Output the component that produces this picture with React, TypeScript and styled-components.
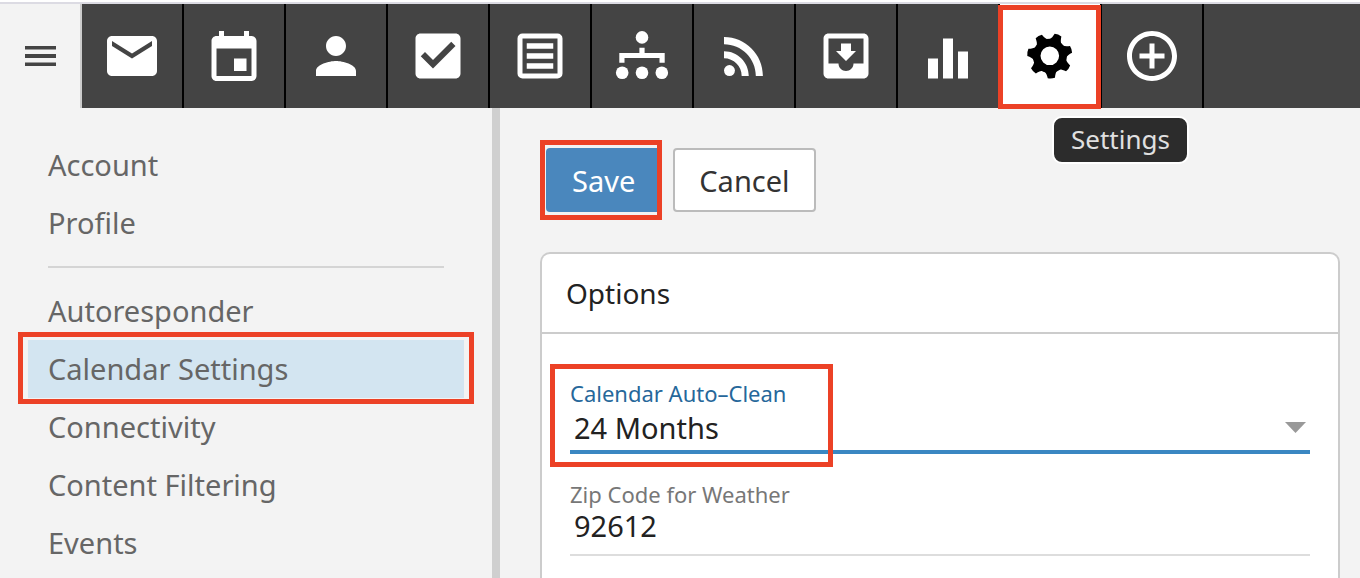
import React from "react";
import styled, { createGlobalStyle, css } from "styled-components";

const GlobalStyle = createGlobalStyle`
  * { box-sizing: border-box; }
  html, body, #root { height: 100%; }
  body {
    margin: 0;
    overflow: hidden;
    background: #f3f3f3;
    font-family: "Noto Sans", "Open Sans", sans-serif;
    font-size: 29px;
    color: #222;
  }
  button, input, select { font: inherit; color: inherit; }
`;

const HIGHLIGHT = "#ec4126";

const Page = styled.div`
  display: flex;
  flex-direction: column;
  min-height: 100%;
  border-top: 2px solid #fff;
`;

const TopBar = styled.header`
  display: flex;
  height: 106px;
  background: #444;
  border-top: 2px solid #dcdbe3;
`;

const MenuButton = styled.button`
  width: 82px;
  padding: 0;
  border: 0;
  border-right: 2px solid #ccc;
  background: #f3f3f3;
  display: grid;
  place-items: center;
`;

const Tabs = styled.nav`
  display: flex;
`;

const Tab = styled.button<{ $active?: boolean }>`
  position: relative;
  width: 102px;
  padding: 0;
  border: 0;
  border-right: 2px solid #000;
  background: ${(p) => (p.$active ? "#fff" : "#444")};
  color: ${(p) => (p.$active ? "#000" : "#fff")};
  display: grid;
  place-items: center;
`;

const Marker = styled.span<{ $inset: string; $width?: string }>`
  position: absolute;
  inset: ${(p) => p.$inset};
  width: ${(p) => p.$width ?? "auto"};
  border: 5px solid ${HIGHLIGHT};
  pointer-events: none;
  z-index: 1;
`;

const Tooltip = styled.span`
  position: absolute;
  top: 112px;
  left: 52px;
  z-index: 2;
  padding: 0 17px 2px;
  border: 2px solid #fff;
  border-radius: 10px;
  background: #2c2c2c;
  color: #e0e0e0;
  font-size: 26px;
  line-height: 42px;
`;

const Icon = styled.svg`
  display: block;
  width: 60px;
  height: 60px;
  fill: currentColor;
`;

const MenuIcon = styled(Icon)`
  fill: #444;
`;

const Body = styled.div`
  display: flex;
  flex: 1;
`;

const Sidebar = styled.aside`
  width: 500px;
  padding: 28px 28px 0;
  border-right: 8px solid #cfcfcf;
`;

const NavItem = styled.a<{ $active?: boolean }>`
  position: relative;
  display: block;
  padding: 0 20px;
  line-height: 58px;
  color: #666;
  text-decoration: none;
  background: ${(p) => (p.$active ? "#d3e5f1" : "transparent")};
`;

const Divider = styled.hr`
  margin: 14px 20px;
  border: 0;
  height: 2px;
  background: #d4d4d4;
`;

const Main = styled.main`
  flex: 1;
  display: flex;
  flex-direction: column;
  gap: 40px;
  padding: 40px 20px 0 40px;
`;

const Actions = styled.div`
  display: flex;
  gap: 12px;
  padding-left: 6px;
`;

const Button = styled.button<{ $primary?: boolean }>`
  position: relative;
  height: 64px;
  padding: 0 24px;
  border: 2px solid #bbb;
  border-radius: 4px;
  background: #fff;
  color: #333;
  ${(p) =>
    p.$primary &&
    css`
      border-color: #4a87bd;
      background: #4a87bd;
      color: #fff;
    `}
`;

const Panel = styled.section`
  flex: 1;
  border: 2px solid #ccc;
  border-bottom: 0;
  border-radius: 10px 10px 0 0;
  background: #fff;
`;

const PanelTitle = styled.h2`
  margin: 0;
  padding: 0 24px;
  border-bottom: 2px solid #ccc;
  font-size: 28px;
  font-weight: 400;
  line-height: 78px;
`;

const Form = styled.form`
  display: flex;
  flex-direction: column;
  gap: 26px;
  padding: 45px 28px 0;
`;

const Field = styled.div<{ $focused?: boolean }>`
  position: relative;
  display: flex;
  flex-direction: column;
  border-bottom: ${(p) => (p.$focused ? "4px solid #3a87c2" : "2px solid #ddd")};
  padding-bottom: ${(p) => (p.$focused ? "3px" : "12px")};
`;

const FieldLabel = styled.label<{ $focused?: boolean }>`
  font-size: 22px;
  line-height: 28px;
  color: ${(p) => (p.$focused ? "#26679a" : "#777")};
`;

const control = css`
  width: 100%;
  padding: 0 4px;
  border: 0;
  outline: 0;
  border-radius: 0;
  background: transparent;
  appearance: none;
`;

const Select = styled.select`
  ${control}
  height: 40px;
`;

const TextInput = styled.input`
  ${control}
  height: 34px;
`;

const Arrow = styled.svg`
  position: absolute;
  right: 4px;
  bottom: 17px;
  width: 21px;
  height: 11px;
  fill: #999;
  pointer-events: none;
`;

const GEAR_TEETH = 7;
const GEAR_START = -4;

const gear = (
  <g transform="translate(29.8 29.8)">
    <circle r="13.2" fill="none" stroke="currentColor" strokeWidth="7.8" />
    {Array.from({ length: GEAR_TEETH }, (_, i) => (
      <path
        key={i}
        transform={`rotate(${GEAR_START + (i * 360) / GEAR_TEETH})`}
        d="M-6.500 15C-4.800 17-4.200 19-3.600 22.200Q0 23.200 3.600 22.200C4.200 19 4.800 17 6.500 15z"
      />
    ))}
  </g>
);

const tabs: { name: string; viewBox?: string; shape: React.ReactNode }[] = [
  {
    name: "Mail",
    shape: <path d="M20 4H4c-1.1 0-1.99.9-1.99 2L2 18c0 1.1.9 2 2 2h16c1.1 0 2-.9 2-2V6c0-1.1-.9-2-2-2zm0 4l-8 5-8-5V6l8 5 8-5v2z" />,
  },
  {
    name: "Calendar",
    viewBox: "0 -1 24 24",
    shape: <path d="M17 12h-5v5h5v-5zM16 1v2H8V1H6v2H5c-1.11 0-1.99.9-1.99 2L3 19c0 1.1.89 2 2 2h14c1.1 0 2-.9 2-2V5c0-1.1-.9-2-2-2h-1V1h-2zm3 18H5V8h14v11z" />,
  },
  {
    name: "Contacts",
    shape: <path d="M12 12c2.21 0 4-1.79 4-4s-1.79-4-4-4-4 1.79-4 4 1.79 4 4 4zm0 2c-2.67 0-8 1.34-8 4v2h16v-2c0-2.66-5.33-4-8-4z" />,
  },
  {
    name: "Tasks",
    shape: <path d="M19 3H5c-1.11 0-2 .9-2 2v14c0 1.1.89 2 2 2h14c1.11 0 2-.9 2-2V5c0-1.1-.89-2-2-2zm-9 14l-4.900-4.900 1.700-1.700L10 13.600l7.300-7.300L19 8l-9 9z" />,
  },
  {
    name: "Notes",
    shape: <path fillRule="evenodd" d="M5 3h14a2 2 0 0 1 2 2v14a2 2 0 0 1-2 2H5a2 2 0 0 1-2-2V5a2 2 0 0 1 2-2zm0 2v14h14V5zM6.7 6.900h10.6v2.200H6.7zM6.7 10.900h10.6v2.200H6.7zM6.7 14.900h10.6v2.200H6.7z" />,
  },
  {
    name: "Organization",
    viewBox: "0 0 60 60",
    shape: (
      <>
        <circle cx="30" cy="11.4" r="6.3" />
        <path d="M27.4 21.7h5.2V27h20.1v9.7h-5.2V32h-35v4.7H7.3V27h20.1z" />
        <circle cx="10.2" cy="46.7" r="6.3" />
        <circle cx="30" cy="46.7" r="6.3" />
        <circle cx="49.8" cy="46.7" r="6.3" />
      </>
    ),
  },
  {
    name: "News feeds",
    shape: (
      <>
        <circle cx="6.18" cy="17.82" r="2.18" />
        <path d="M4 4.44v2.83c7.03 0 12.73 5.7 12.73 12.73h2.83c0-8.59-6.97-15.56-15.56-15.56zm0 5.66v2.83c3.9 0 7.07 3.17 7.07 7.07h2.83c0-5.47-4.43-9.9-9.9-9.9z" />
      </>
    ),
  },
  {
    name: "Downloads",
    shape: <path d="M16 10h-2V7h-4v3H8l4 4 4-4zm3-7H4.99C3.88 3 3.01 3.9 3.01 5L3 19c0 1.1.88 2 1.99 2H19c1.1 0 2-.9 2-2V5c0-1.1-.9-2-2-2zm0 12h-4c0 1.66-1.35 3-3 3s-3-1.34-3-3H4.99V5H19v10z" />,
  },
  {
    name: "Reports",
    shape: <path d="M4 13h4v8H4zM10 5h4v16h-4zM16 10.2h4V21h-4z" />,
  },
  {
    name: "Settings",
    viewBox: "0 0 60 60",
    shape: gear,
  },
  {
    name: "Add",
    shape: <path d="M13 7h-2v4H7v2h4v4h2v-4h4v-2h-4V7zm-1-5C6.48 2 2 6.48 2 12s4.48 10 10 10 10-4.48 10-10S17.52 2 12 2zm0 18c-4.41 0-8-3.59-8-8s3.59-8 8-8 8 3.59 8 8-3.59 8-8 8z" />,
  },
];

const accountItems = ["Account", "Profile"];
const settingItems = ["Autoresponder", "Calendar Settings", "Connectivity", "Content Filtering", "Events"];

export default function App() {
  return (
    <>
      <GlobalStyle />
      <Page>
        <TopBar>
          <MenuButton aria-label="Menu">
            <MenuIcon viewBox="0 0 60 60">
              <path d="M15 20h31v3.500H15zM15 28h31v4H15zM15 36.500h31V40H15z" />
            </MenuIcon>
          </MenuButton>
          <Tabs>
            {tabs.map((tab) => {
              const active = tab.name === "Settings";
              return (
                <Tab key={tab.name} $active={active} aria-label={tab.name}>
                  <Icon viewBox={tab.viewBox ?? "0 0 24 24"}>{tab.shape}</Icon>
                  {active && <Marker $inset="1px -1px -1px -2px" />}
                  {active && <Tooltip role="tooltip">Settings</Tooltip>}
                </Tab>
              );
            })}
          </Tabs>
        </TopBar>
        <Body>
          <Sidebar>
            {accountItems.map((item) => (
              <NavItem key={item} href="#">{item}</NavItem>
            ))}
            <Divider />
            {settingItems.map((item) => {
              const active = item === "Calendar Settings";
              return (
                <NavItem key={item} href="#" $active={active}>
                  {item}
                  {active && <Marker $inset="-8px -10px -6px" />}
                </NavItem>
              );
            })}
          </Sidebar>
          <Main>
            <Actions>
              <Button $primary>
                Save
                <Marker $inset="-10px -3px -10px -8px" />
              </Button>
              <Button>Cancel</Button>
            </Actions>
            <Panel>
              <PanelTitle>Options</PanelTitle>
              <Form>
                <Field $focused>
                  <FieldLabel htmlFor="auto-clean" $focused>Calendar Auto–Clean</FieldLabel>
                  <Select id="auto-clean" defaultValue="24">
                    <option value="24">24 Months</option>
                  </Select>
                  <Arrow viewBox="0 0 21 11"><path d="M0 0h21L10.5 11z" /></Arrow>
                  <Marker $inset="-15px auto -17px -20px" $width="283px" />
                </Field>
                <Field>
                  <FieldLabel htmlFor="zip">Zip Code for Weather</FieldLabel>
                  <TextInput id="zip" defaultValue="92612" />
                </Field>
              </Form>
            </Panel>
          </Main>
        </Body>
      </Page>
    </>
  );
}
